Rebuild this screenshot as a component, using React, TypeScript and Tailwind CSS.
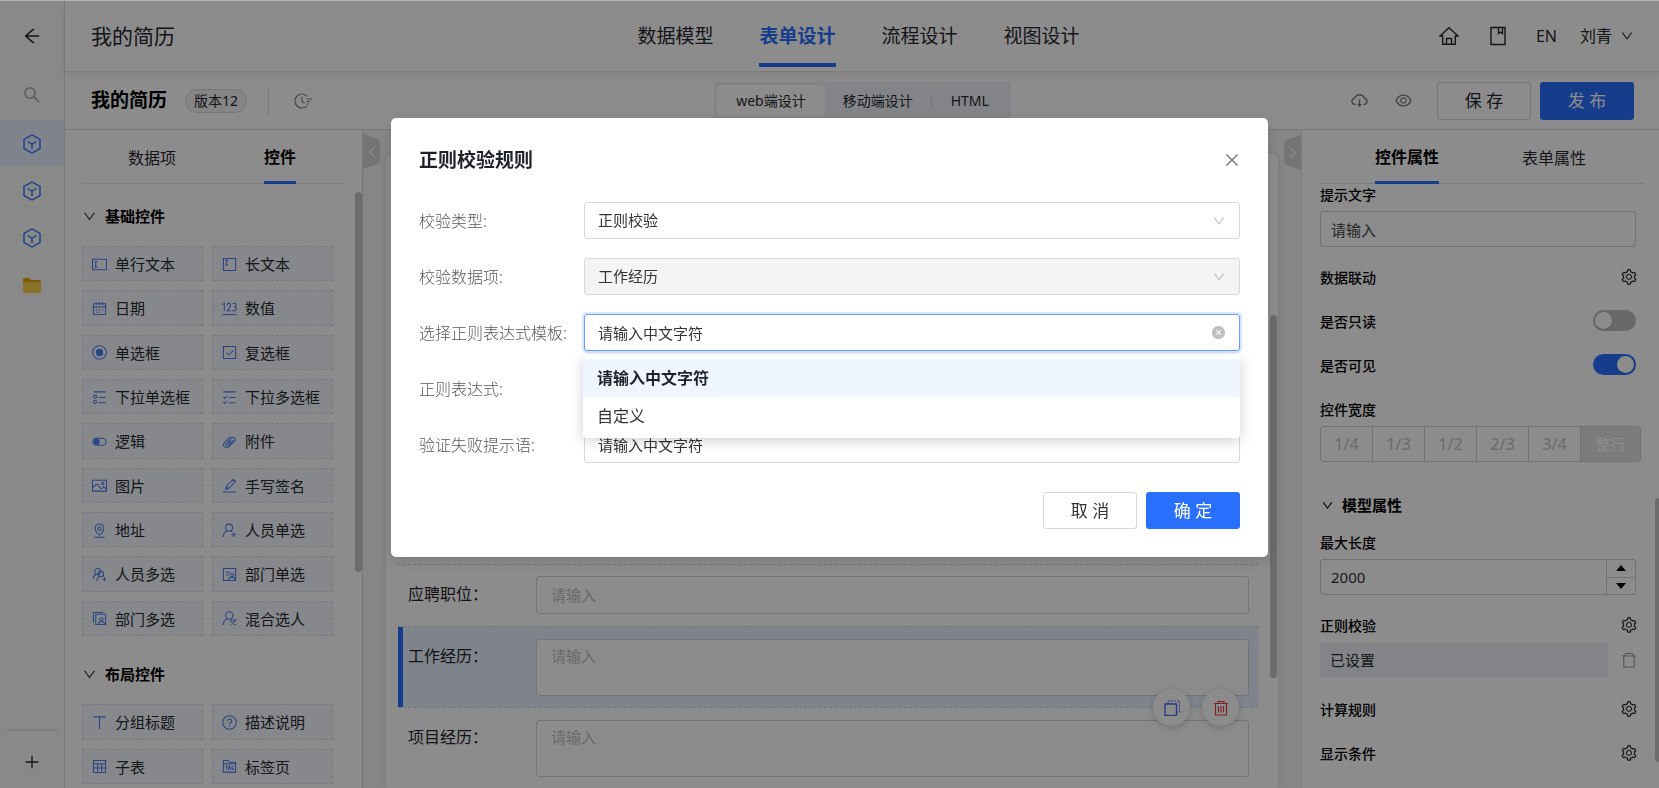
import React, { useState } from "react";
import {
  AiFillCloseCircle,
  AiOutlineArrowLeft,
  AiOutlineClose,
  AiOutlineCloudDownload,
  AiOutlineDown,
  AiOutlineEye,
  AiOutlineLeft,
  AiOutlinePlus,
  AiOutlineRight,
  AiOutlineSearch,
  AiOutlineSetting,
} from "react-icons/ai";

type IconProps = { className?: string; children?: React.ReactNode };

function Glyph({ className = "size-[15px]", children }: IconProps) {
  return (
    <svg
      viewBox="0 0 16 16"
      className={`shrink-0 ${className}`}
      fill="none"
      stroke="currentColor"
      strokeWidth="1.1"
      aria-hidden="true"
    >
      {children}
    </svg>
  );
}

function Cube() {
  return (
    <svg viewBox="0 0 18 20" className="h-5 w-[18px]" fill="none" stroke="currentColor" strokeWidth="1.4" aria-hidden="true">
      <path d="M9 1 17 5.500v9L9 19 1 14.500v-9zM4.500 7.500 9 10l4.500-2.500M9 10v5" />
    </svg>
  );
}

const icons: Record<string, React.ReactNode> = {
  text: <path d="M.5 2.500h15v11H.5zM2.500 5h3M2.500 11h3M4 5v6" />,
  long: <path d="M1.500 1.500h13v13h-13zM3.500 3.500h3M3.500 8.500h3M5 3.500v5" />,
  date: <path d="M1.500 3h13v11.500h-13zM1.500 6.500h13M4.500 1v3.500M8 1v3.500M11.500 1v3.500M4 9.500h1.500M7.200 9.500h1.500M10.500 9.500H12M4 12h1.500M7.200 12h1.500" />,
  number: (
    <>
      <path d="M.5 14.500h15" />
      <path d="m.8 3.800 1.700-1.300v8M5.500 4.500c0-2.600 3.600-2.600 3.600-.2 0 2-2 3.500-3.600 6.200h4M11.300 3c1-1 3.700-.7 3.700 1.300 0 1.400-1 2-2.200 2 1.400 0 2.500.7 2.500 2.200 0 2.300-3.300 2.500-4.200 1.300" />
    </>
  ),
  radio: (
    <>
      <circle cx="8" cy="8" r="7.200" />
      <circle cx="8" cy="8" r="3.900" fill="currentColor" stroke="none" />
    </>
  ),
  check: <path d="M1.500 1.500h13v13h-13zM4.500 8l2.700 2.700 4.800-5" />,
  dropOne: (
    <>
      <path d="M2 2h12.500M7 8h7.500M7 13.500h7.500" />
      <circle cx="3.300" cy="7.200" r="1.600" />
      <circle cx="3.300" cy="12.800" r="1.600" />
    </>
  ),
  dropMany: <path d="M1.500 2h13M7 8h7.500M7 13.500h7.500M1.500 7.500 3 9l2.200-2.600M1.500 12.800 3 14.300l2.200-2.600" />,
  logic: (
    <>
      <rect x="1" y="4.500" width="14" height="7.500" rx="3.750" />
      <circle cx="5" cy="8.200" r="3.300" fill="currentColor" stroke="none" />
    </>
  ),
  clip: <path d="M12.300 6.500 6.900 12c-1.300 1.300-3.500-.6-2.200-2L10 4.500c2.300-2.200 5.500.8 3.300 3.200L7.500 13.500c-3.200 3-7.800-1.200-4.700-4.600L9 2.700M9.800 7l-3.700 3.700" />,
  image: (
    <>
      <path d="M.5 2.500h15v11.500H.5zM.8 10.500 4 7c.6-.6 1.300-.6 1.900 0l3.400 3.800c.6.600 1.200.6 1.800 0L12.500 9.200l3 2.800" />
      <circle cx="11.500" cy="5.800" r="1.200" />
    </>
  ),
  sign: <path d="M1 15h14M4 12l.8-3.500L12 1.500l2.300 2-7 7.500zM6.200 9.800 4 12" />,
  pin: (
    <>
      <path d="M2.500 15.300h11M8 13c-7-5.500-5.200-12 0-12s7 6.500 0 12z" />
      <circle cx="8" cy="6" r="1.900" />
    </>
  ),
  person: (
    <>
      <circle cx="7.500" cy="5" r="3.800" />
      <path d="M1.300 14.800c.2-3.600 2-5.800 4.500-6.300M9.500 8.300l1.500 1M12.500 10v5M10 12.500h5" />
    </>
  ),
  people: (
    <>
      <circle cx="6" cy="4.800" r="3.200" />
      <circle cx="9.500" cy="7.500" r="2.900" />
      <path d="M1 12.500c.3-2.500 1.500-4 3.300-4.700M5 14.800c.2-2.300 1.300-3.700 2.800-4.600M13.200 11v4M11.200 13h4" />
    </>
  ),
  dept: (
    <>
      <path d="M1.500 1.500h13v13h-13zM4 5.500h4.500M4 8.500h3" />
      <circle cx="10.500" cy="8.800" r="1.800" />
      <path d="M7 14c.3-4 6.700-4 7 0" />
    </>
  ),
  depts: (
    <>
      <path d="M4 3.500h10.500v11H4zM1.500 12.500v-11H12" />
      <circle cx="10" cy="9" r="1.800" />
      <path d="M7 14.300c.3-4 6-4 6.300 0" />
    </>
  ),
  mixed: (
    <>
      <circle cx="7.800" cy="4.800" r="3.900" />
      <path d="M1.300 14.800c.2-3.600 2-5.800 4.500-6.300M8 9.500h7l-5 5M9 11l6 4" />
    </>
  ),
  heading: <path d="M1.500 2h13M8 2v13" />,
  help: (
    <>
      <circle cx="8" cy="8" r="7.200" />
      <path d="M5.800 6.500c0-3 4.500-3 4.500-.2C10.300 8 8 8 8 10M8 11.300v1.300" />
    </>
  ),
  table: <path d="M1.500 1.500h13v13h-13zM1.500 5h13M1.500 9.500h13M6 5v9.500M10.300 5v9.500" />,
  tag: <path d="M1.500 14V1.500h5L8 3.500h6.500V14zM1.500 5h13M3.500 7.500h3M5 7.500v4M6.700 11.500l1.300-4 1.300 4M12.500 8c-2.500-.8-2.500 3.500 0 3.300V10" />,
};

const basicControls: [string, string][] = [
  ["单行文本", "text"],
  ["长文本", "long"],
  ["日期", "date"],
  ["数值", "number"],
  ["单选框", "radio"],
  ["复选框", "check"],
  ["下拉单选框", "dropOne"],
  ["下拉多选框", "dropMany"],
  ["逻辑", "logic"],
  ["附件", "clip"],
  ["图片", "image"],
  ["手写签名", "sign"],
  ["地址", "pin"],
  ["人员单选", "person"],
  ["人员多选", "people"],
  ["部门单选", "dept"],
  ["部门多选", "depts"],
  ["混合选人", "mixed"],
];

const layoutControls: [string, string][] = [
  ["分组标题", "heading"],
  ["描述说明", "help"],
  ["子表", "table"],
  ["标签页", "tag"],
];

function Rail() {
  return (
    <aside className="flex w-[65px] shrink-0 flex-col items-center border-r border-[#e0e0e0] bg-[#fafafa]">
      <button aria-label="返回" className="flex h-[69px] items-center text-[#1f2329]">
        <AiOutlineArrowLeft className="size-5" />
      </button>
      <button aria-label="搜索" className="flex h-[50px] items-center text-[#a6a6a6]">
        <AiOutlineSearch className="size-[20px]" />
      </button>
      {[0, 1, 2].map((i) => (
        <button
          key={i}
          aria-label={`应用 ${i + 1}`}
          className={`flex h-[47px] items-center justify-center self-stretch text-[#2970ff] ${i === 0 ? "bg-[#e6efff]" : ""}`}
        >
          <Cube />
        </button>
      ))}
      <button aria-label="文件夹" className="flex h-[47px] items-center">
        <svg viewBox="0 0 18 16" className="h-4 w-[18px]" aria-hidden="true">
          <path d="M0 2.500Q0 1 1.500 1H6l2 2h8.500Q18 3 18 4.500V8H0z" fill="#e8a400" />
          <path d="M0 5h18v9.500q0 1.500-1.500 1.500h-15Q0 16 0 14.500z" fill="#ffcf4a" />
        </svg>
      </button>
      <div className="mt-auto w-[51px] border-t-2 border-[#e6e6e6]" />
      <button aria-label="新增" className="flex h-[57px] items-center pt-1 text-[#1f2329]">
        <AiOutlinePlus className="size-[18px]" />
      </button>
    </aside>
  );
}

function Header() {
  return (
    <header className="z-[1] grid h-[71px] shrink-0 grid-cols-[1fr_auto_1fr] items-center border-b border-[#e2e2e2] bg-white pr-[25px] pl-[26px] shadow-[0_3px_8px_rgba(0,0,0,0.08)]">
      <h1 className="pt-0.5 text-[21px]">我的简历</h1>
      <nav className="flex h-full gap-[46px] pr-2 text-[19px]">
        {["数据模型", "表单设计", "流程设计", "视图设计"].map((t, i) => (
          <a
            key={t}
            href="#"
            className={`flex h-[66px] items-center border-b-4 pt-2 ${i === 1 ? "border-[#2970ff] font-bold text-[#2970ff]" : "border-transparent"}`}
          >
            {t}
          </a>
        ))}
      </nav>
      <div className="flex items-center justify-end text-[16px]">
        <button aria-label="首页">
          <svg viewBox="0 0 20 20" className="size-5" fill="none" stroke="currentColor" strokeWidth="1.4" aria-hidden="true">
            <path d="M1 10 10 1.700l9 8.300h-2.700v8.300H3.700V10zM7.500 18v-5.500h5V18" />
          </svg>
        </button>
        <button aria-label="手册" className="ml-[31px]">
          <svg viewBox="0 0 16 20" className="h-5 w-4" fill="none" stroke="currentColor" strokeWidth="1.4" aria-hidden="true">
            <path d="M1 1.500h14v17H1zM8.500 1.500v6l2-1.500 2 1.500v-6" />
          </svg>
        </button>
        <button className="ml-[30px]">EN</button>
        <button className="ml-[23px] flex items-center gap-2">
          刘青
          <AiOutlineDown className="size-[14px]" />
        </button>
      </div>
    </header>
  );
}

function Toolbar() {
  return (
    <div className="grid h-[58px] shrink-0 grid-cols-[1fr_auto_1fr] items-center border-b border-[#d9d9d9] bg-white pr-[25px] pl-[26px]">
      <div className="flex items-center">
        <h2 className="text-[19px] font-bold text-black">我的简历</h2>
        <span className="ml-[18px] flex h-6 items-center rounded-full border border-[#d9d9d9] bg-[#f2f2f2] px-2 text-[14px]">版本12</span>
        <span className="ml-[21px] h-7 border-l border-[#d9d9d9]" />
        <button aria-label="历史" className="ml-[25px] text-[#808080]">
          <svg viewBox="0 0 18 16" className="h-4 w-[18px]" fill="none" stroke="currentColor" strokeWidth="1.200" aria-hidden="true">
            <path d="M13 3.200A7 7 0 1 0 13 12.800M8 4v4.500l2.500 1.500M12.500 6H18M12.500 8.500H16M12.500 11H14.500" />
          </svg>
        </button>
      </div>
      <div className="flex h-[37px] items-center rounded-[3px] bg-[#eef1f6] p-[3px] text-[14px]">
        <button className="h-[31px] rounded-[3px] bg-white px-[19px]">web端设计</button>
        <button className="px-[18px]">移动端设计</button>
        <span className="h-[14px] border-l border-[#d9d9d9]" />
        <button className="px-[19px]">HTML</button>
      </div>
      <div className="flex items-center justify-end">
        <button aria-label="下载" className="text-[#7a7a7a]">
          <AiOutlineCloudDownload className="size-[19px]" />
        </button>
        <button aria-label="预览" className="ml-[25px] text-[#7a7a7a]">
          <AiOutlineEye className="size-[19px]" />
        </button>
        <button className="ml-6 h-[38px] w-[94px] rounded-[3px] border border-[#d9d9d9] text-[17px]">保 存</button>
        <button className="ml-[9px] h-[38px] w-[94px] rounded-[3px] bg-[#2970ff] text-[17px] text-white">发 布</button>
      </div>
    </div>
  );
}

function ControlGroup({ title, items, className }: { title: string; items: [string, string][]; className: string }) {
  return (
    <section>
      <h3 className="mb-[18px] flex h-6 items-center gap-[8px] text-[15px] font-bold text-black">
        <AiOutlineDown className="size-[15px] text-[#444]" />
        {title}
      </h3>
      <div className={`grid auto-rows-fr grid-cols-2 gap-[9px] ${className}`}>
        {items.map(([label, icon]) => (
          <button
            key={label}
            className="flex items-center gap-2 border border-dashed border-[#dcdfe8] bg-[#f5f8ff] pt-px pl-[9px] text-[15px] whitespace-nowrap"
          >
            <span className="text-[#4a7cf0]">
              <Glyph>{icons[icon]}</Glyph>
            </span>
            {label}
          </button>
        ))}
      </div>
    </section>
  );
}

function ControlsPanel() {
  return (
    <aside className="relative flex w-[298px] shrink-0 flex-col border-r border-[#d9d9d9] bg-white pl-[17px]">
      <div className="mr-[18px] flex h-[54px] shrink-0 justify-around border-b border-[#e2e2e2] pr-[6px] text-[16px]">
        <button className="px-1 pt-0.5">数据项</button>
        <button className="-mb-px border-b-[3px] border-[#2970ff] pt-[3px] font-bold text-black">控件</button>
      </div>
      <div className="mr-[29px] flex min-h-0 flex-1 flex-col gap-[26px] overflow-hidden pt-5">
        <ControlGroup title="基础控件" items={basicControls} className="h-[390px]" />
        <ControlGroup title="布局控件" items={layoutControls} className="h-20" />
      </div>
      <div className="absolute top-[62px] right-0 h-[380px] w-[7px] rounded-full bg-[#c2c6c4]" />
    </aside>
  );
}

function FormRow({ label, multi, active }: { label: string; multi?: boolean; active?: boolean }) {
  const box = "min-w-0 flex-1 resize-none rounded-[3px] border border-[#d4d4d4] bg-white px-[14px] text-[15px] placeholder:text-[#bfbfbf]";
  return (
    <div
      className={`relative flex items-start border-t border-dashed border-[#d4d4d4] pr-[9px] ${multi ? "h-[81px]" : "h-[62px]"} ${active ? "bg-[#e7f1ff]" : ""}`}
    >
      <span className={`w-[5px] shrink-0 self-stretch ${active ? "bg-[#2970ff]" : ""}`} />
      <label htmlFor={label} className="mt-[10px] w-[133px] shrink-0 pl-[5px] text-[16px] leading-[38px] text-[#1f2329]">
        {label}：
      </label>
      {multi ? (
        <textarea id={label} placeholder="请输入" className={`${box} mt-3 h-[57px] py-[5px]`} />
      ) : (
        <input id={label} placeholder="请输入" className={`${box} mt-[11px] h-[38px]`} />
      )}
      {active && (
        <div className="absolute right-[19px] -bottom-[19px] z-[1] flex gap-3">
          <button aria-label="复制" className="flex size-[37px] items-center justify-center rounded-full bg-white text-[#4a6cf0] shadow-[0_2px_8px_rgba(0,0,0,0.2)]">
            <Glyph className="size-4">
              <path d="M1 4h11.500v11.500H1z" strokeWidth="1.400" />
              <path d="M4 4V1h11.500v11h-3" strokeDasharray="2 1" />
            </Glyph>
          </button>
          <button aria-label="删除" className="flex size-[37px] items-center justify-center rounded-full bg-white text-[#e5393f] shadow-[0_2px_8px_rgba(0,0,0,0.2)]">
            <Glyph className="size-4">
              <path d="M1 3.500h14M2.500 3.500v11.500h11V3.500M5 3.500V1.500h6v2M5.500 6v6.500M8 6v6.500M10.500 6v6.500" />
            </Glyph>
          </button>
        </div>
      )}
    </div>
  );
}

function Canvas() {
  return (
    <main className="relative flex min-w-0 flex-1 flex-col overflow-hidden bg-[#f4f5f7] px-[23px] pt-[23px]">
      <button aria-label="收起左栏" className="absolute top-1 left-0 flex h-[35px] w-[17px] items-center justify-center text-white">
        <svg viewBox="0 0 17 35" className="absolute inset-0" aria-hidden="true">
          <path d="M0 0 12 4q5 1 5 5v17q0 4-5 5L0 35z" fill="#d4d4d4" />
        </svg>
        <AiOutlineLeft className="relative size-[14px]" />
      </button>
      <button aria-label="收起右栏" className="absolute top-[5px] right-0 flex h-[35px] w-[17px] items-center justify-center text-white">
        <svg viewBox="0 0 17 35" className="absolute inset-0" aria-hidden="true">
          <path d="M17 0 5 4Q0 5 0 9v17q0 4 5 5l12 4z" fill="#d4d4d4" />
        </svg>
        <AiOutlineRight className="relative size-[14px]" />
      </button>
      <div className="relative min-h-0 flex-1 rounded-t-lg bg-white pt-[411px] pr-5 pl-3 shadow-[0_0_6px_rgba(0,0,0,0.12)]">
        <FormRow label="应聘职位" />
        <FormRow label="工作经历" multi active />
        <FormRow label="项目经历" multi />
        <div className="absolute top-[162px] right-px h-[363px] w-[7px] rounded-full bg-[#c2c6c4]" />
      </div>
    </main>
  );
}

function Prop({ title, className, children }: { title: string; className: string; children?: React.ReactNode }) {
  return (
    <div className={`flex h-[22px] shrink-0 items-center justify-between pb-0.5 text-[14px] font-medium text-black ${className}`}>
      <span>{title}</span>
      {children}
    </div>
  );
}

function Gear({ label }: { label: string }) {
  return (
    <button aria-label={label} className="-mr-0.5 text-[#333]">
      <AiOutlineSetting className="size-[18px]" />
    </button>
  );
}

function Toggle({ label, on }: { label: string; on: boolean }) {
  const [checked, setChecked] = useState(on);
  return (
    <input
      type="checkbox"
      role="switch"
      aria-label={label}
      checked={checked}
      onChange={() => setChecked(!checked)}
      className="-mt-px h-[21px] w-[43px] appearance-none rounded-full bg-[#bfbfbf] p-[2px] before:block before:size-[17px] before:rounded-full before:bg-white before:shadow-sm before:content-[''] checked:bg-[#2970ff] checked:before:ml-[22px]"
    />
  );
}

function PropertiesPanel() {
  return (
    <aside className="relative flex w-[358px] shrink-0 flex-col border-l border-[#e2e2e2] bg-white pl-[18px]">
      <div className="mr-4 flex h-[54px] shrink-0 border-b border-[#e2e2e2] text-[16px]">
        <div className="flex flex-1 justify-center pr-[5px] pl-4">
          <button className="-mb-px border-b-[3px] border-[#2970ff] pt-[3px] font-bold text-black">控件属性</button>
        </div>
        <div className="flex flex-1 justify-center pr-[18px]">
          <button className="pt-0.5">表单属性</button>
        </div>
      </div>
      <div className="mr-[18px] flex min-h-0 flex-1 flex-col overflow-hidden pr-[5px]">
        <Prop title="提示文字" className="" />
        <input aria-label="提示文字" defaultValue="请输入" className="mt-[5px] h-9 shrink-0 rounded-[3px] border border-[#d0d0d0] px-[10px] text-[15px] text-[#444]" />
        <Prop title="数据联动" className="mt-5">
          <Gear label="设置数据联动" />
        </Prop>
        <Prop title="是否只读" className="mt-[22px]">
          <Toggle label="是否只读" on={false} />
        </Prop>
        <Prop title="是否可见" className="mt-[22px]">
          <Toggle label="是否可见" on={true} />
        </Prop>
        <Prop title="控件宽度" className="mt-[22px]" />
        <div className="mt-[5px] -mr-[5px] flex h-9 shrink-0 overflow-hidden rounded-[3px] border border-[#d0d0d0] text-[16px] text-[#c4c4c4]">
          {["1/4", "1/3", "1/2", "2/3", "3/4"].map((w) => (
            <button key={w} disabled className="w-[52px] border-r border-[#d0d0d0]">
              {w}
            </button>
          ))}
          <button disabled className="flex-1 bg-[#e2e2e2] text-[15px] text-white">整行</button>
        </div>
        <h3 className="mt-[31px] flex h-6 shrink-0 items-center gap-[8px] pl-px text-[15px] font-bold text-black">
          <AiOutlineDown className="size-[13px]" />
          模型属性
        </h3>
        <Prop title="最大长度" className="mt-[15px]" />
        <div className="mt-[5px] flex h-9 shrink-0 rounded-[3px] border border-[#d0d0d0]">
          <input aria-label="最大长度" inputMode="numeric" defaultValue="2000" className="min-w-0 flex-1 px-[10px] text-[15px] text-[#333]" />
          <div className="flex w-[29px] flex-col border-l border-[#d0d0d0] text-black">
            <button aria-label="增加" className="flex flex-1 items-center justify-center border-b border-[#d0d0d0]">
              <svg viewBox="0 0 10 6" className="h-[6px] w-[10px]" fill="currentColor" aria-hidden="true"><path d="M0 6 5 0l5 6z" /></svg>
            </button>
            <button aria-label="减少" className="flex flex-1 items-center justify-center">
              <svg viewBox="0 0 10 6" className="h-[6px] w-[10px]" fill="currentColor" aria-hidden="true"><path d="M0 0h10L5 6z" /></svg>
            </button>
          </div>
        </div>
        <Prop title="正则校验" className="mt-5">
          <Gear label="设置正则校验" />
        </Prop>
        <div className="mt-[6px] flex h-[34px] shrink-0 items-center justify-between">
          <span className="flex h-full w-[288px] items-center rounded-[2px] bg-[#eef1f6] pl-[10px] text-[15px]">已设置</span>
          <button aria-label="删除正则校验" className="-mr-px text-[#999]">
            <Glyph className="size-4">
              <path d="M1 4h14M2.800 4v11h10.400V4M3.800 4l1-2.500h6.400l1 2.500" />
            </Glyph>
          </button>
        </div>
        <Prop title="计算规则" className="mt-[22px]">
          <Gear label="设置计算规则" />
        </Prop>
        <Prop title="显示条件" className="mt-[22px]">
          <Gear label="设置显示条件" />
        </Prop>
      </div>
      <div className="absolute top-[368px] right-0 h-[264px] w-1 rounded-l-full bg-[#c2c6c4]" />
    </aside>
  );
}

function Field({ label, id, children }: { label: string; id: string; children?: React.ReactNode }) {
  return (
    <div className="flex h-[37px] items-center">
      <label htmlFor={id} className="w-[165px] shrink-0 text-[16px] font-light text-[#595959]">
        {label}:
      </label>
      <div className="relative min-w-0 flex-1">{children}</div>
    </div>
  );
}

const fieldClass = "block h-[37px] w-full appearance-none rounded-[3px] border px-[13px] text-[15px] text-[#333] opacity-100 outline-none";

function RuleDialog() {
  const arrow = "pointer-events-none absolute top-[12px] right-[14px] size-[14px] text-[#bfbfbf]";
  return (
    <div className="fixed inset-0 top-px z-50 flex items-start justify-center bg-black/45 pt-[117px]">
      <div
        role="dialog"
        aria-labelledby="rule-title"
        className="w-[877px] rounded-[5px] bg-white px-7 pt-7 pb-7 shadow-[0_4px_16px_rgba(0,0,0,0.15)]"
      >
        <div className="flex h-7 items-center justify-between">
          <h2 id="rule-title" className="pt-px text-[19px] font-bold text-[#1f2329]">正则校验规则</h2>
          <button aria-label="关闭" className="-mr-px text-[#777]">
            <AiOutlineClose className="size-[18px]" />
          </button>
        </div>
        <div className="mt-7 flex flex-col gap-[19px]">
          <Field label="校验类型" id="rule-type">
            <select id="rule-type" className={`${fieldClass} border-[#d9d9d9]`}>
              <option>正则校验</option>
            </select>
            <AiOutlineDown className={arrow} />
          </Field>
          <Field label="校验数据项" id="rule-item">
            <select id="rule-item" disabled className={`${fieldClass} border-[#d9d9d9] bg-[#f4f4f4]`}>
              <option>工作经历</option>
            </select>
            <AiOutlineDown className={arrow} />
          </Field>
          <Field label="选择正则表达式模板" id="rule-template">
            <input
              id="rule-template"
              role="combobox"
              aria-expanded="true"
              aria-controls="template-list"
              defaultValue="请输入中文字符"
              className={`${fieldClass} border-[#6b9eff] shadow-[0_0_0_2px_rgba(41,112,255,0.18)]`}
            />
            <button aria-label="清除" className="absolute top-[11px] right-[14px] text-[#bfbfbf]">
              <AiFillCloseCircle className="size-[15px]" />
            </button>
            <ul
              id="template-list"
              role="listbox"
              className="absolute top-[41px] right-0 -left-px z-10 rounded-[3px] bg-white py-1 text-[16px] shadow-[0_3px_14px_rgba(0,0,0,0.18)]"
            >
              <li role="option" aria-selected="true" className="flex h-[38px] items-center bg-[#f0f6ff] px-[14px] font-bold text-[#1f2329]">
                请输入中文字符
              </li>
              <li role="option" aria-selected="false" className="flex h-[37px] items-center px-[14px] text-[#333]">
                自定义
              </li>
            </ul>
          </Field>
          <Field label="正则表达式" id="rule-expression">
            <input id="rule-expression" className={`${fieldClass} border-[#d9d9d9]`} />
          </Field>
          <Field label="验证失败提示语" id="rule-message">
            <input id="rule-message" defaultValue="请输入中文字符" className={`${fieldClass} border-[#d9d9d9]`} />
          </Field>
        </div>
        <div className="mt-[29px] flex justify-end gap-[9px] text-[17px]">
          <button className="h-[37px] w-[94px] rounded-[3px] border border-[#d9d9d9] text-[#333]">取 消</button>
          <button className="h-[37px] w-[94px] rounded-[3px] bg-[#2970ff] text-white">确 定</button>
        </div>
      </div>
    </div>
  );
}

export default function App() {
  return (
    <div className="flex h-screen overflow-hidden border-t border-[#b4b4b4] bg-white font-['Noto_Sans','Noto_Sans_CJK_SC',sans-serif] text-[#26292e]">
      <Rail />
      <div className="flex min-w-0 flex-1 flex-col">
        <Header />
        <Toolbar />
        <div className="flex min-h-0 flex-1">
          <ControlsPanel />
          <Canvas />
          <PropertiesPanel />
        </div>
      </div>
      <RuleDialog />
    </div>
  );
}
